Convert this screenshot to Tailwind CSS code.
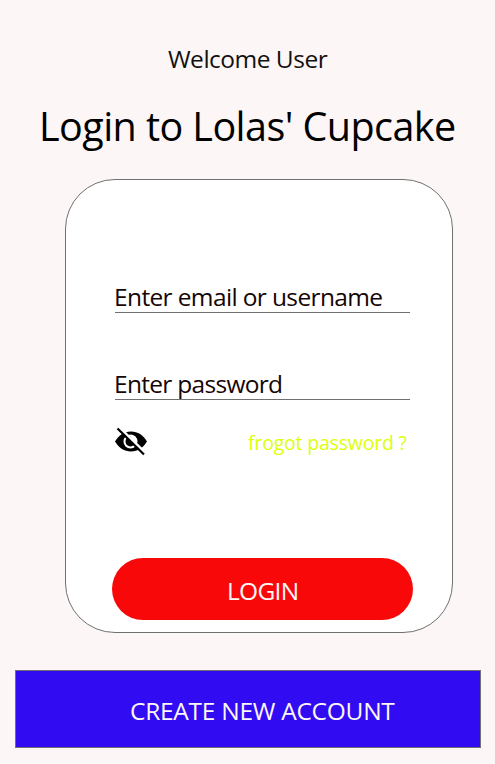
<!DOCTYPE html>
<html lang="en">
<head>
<meta charset="utf-8">
<title>Login</title>
<script src="https://cdn.jsdelivr.net/npm/@tailwindcss/browser@4"></script>
</head>
<body class="bg-[#fcf6f6]">
<main class="flex h-[764px] w-[495px] flex-col overflow-hidden whitespace-nowrap font-['Open_Sans','Noto_Sans',sans-serif] text-[24.5px] leading-8 text-[#160505]">
  <p class="mt-[43px] pl-[168px] tracking-[-0.5px] text-[#111]">Welcome User</p>
  <h1 class="mt-[27px] pl-[39px] text-[39.5px] leading-[48px] tracking-[-0.56px] text-black">Login to Lolas' Cupcake</h1>
  <section class="ml-[65px] mt-[29px] flex h-[454px] w-[388px] flex-col rounded-[50px] border border-[#707070] bg-white pl-[46px]">
    <div class="ml-[3px] mt-[101px] h-[32px] w-[295px] border-b border-[#707070] tracking-[-0.63px]"><span class="-ml-px">Enter email or username</span></div>
    <div class="ml-[3px] mt-[55px] h-[32px] w-[295px] border-b border-[#707070] tracking-[-0.7px]"><span class="-ml-px">Enter password</span></div>
    <div class="ml-[2px] mt-[27px] flex h-[30px] items-start">
      <svg class="h-[29px] w-[34px] shrink-0" viewBox="0 0 34 29">
        <path d="M1 14.500C5 8 10 4.500 17 4.500S29 8 33 14.500C29 21 24 24.500 17 24.500S5 21 1 14.500Z" fill="#000"/>
        <circle cx="16.500" cy="14.500" r="7" fill="#fff"/>
        <path d="M16.500 9.500A5 5 0 1 0 21.500 14.500C20 17 16 15.500 17 13C17.300 11.500 17.500 10.500 16.500 9.500Z" fill="#000"/>
        <path d="M5.500 .5L31.500 26" stroke="#fff" stroke-width="2.500"/>
        <path d="M3.500 1.500L30 27.500" stroke="#000" stroke-width="2.200"/>
      </svg>
      <a class="ml-[100px] pt-[1px] text-[19.5px] leading-[30px] tracking-[-0.2px] text-[#dcff0b]">frogot password ?</a>
    </div>
    <button class="mt-[101px] flex h-[62px] w-[301px] items-center rounded-full bg-[#f80808] pl-[115px] pt-1 text-[24.5px] tracking-[-0.7px] text-[#fcf6f6]">LOGIN</button>
  </section>
  <button class="ml-[15px] mt-[37px] flex h-[78px] w-[466px] items-center border border-[#707070] bg-[#310bf2] pl-[114px] pt-1 text-[24.5px] tracking-[-0.27px] text-[#fcf6f6]">CREATE NEW ACCOUNT</button>
</main>
</body>
</html>
